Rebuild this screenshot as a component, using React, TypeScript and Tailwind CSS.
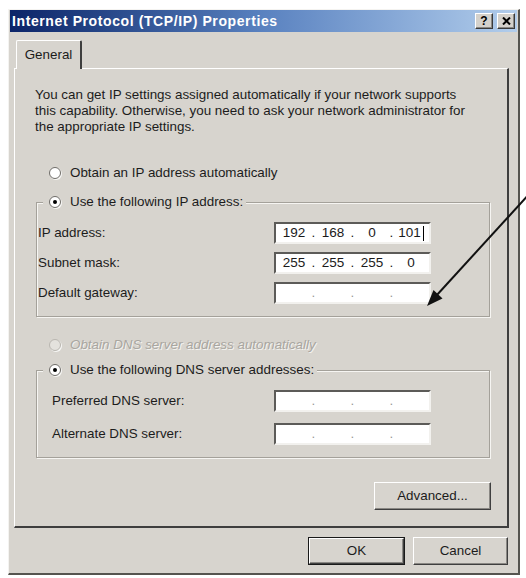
import type { ReactNode } from "react";

const font = { fontFamily: '"Liberation Sans", Arial, sans-serif' };

const Radio = ({ checked, disabled }: { checked?: boolean; disabled?: boolean }) => (
  <span
    className={`relative inline-flex h-[12px] w-[12px] shrink-0 items-center justify-center rounded-full border ${
      disabled ? "border-[#b9b6b0] bg-[#e4e2dd]" : "border-[#6f6d69] bg-white"
    } shadow-[1px_1px_0_#f6f6f4]`}
  >
    {checked && <span className="h-[4px] w-[4px] rounded-full bg-black" />}
  </span>
);

const IpBox = ({ parts, caret }: { parts?: string[]; caret?: boolean }) => {
  const segs = parts ?? ["", "", "", ""];
  return (
    <div className="flex h-[22px] w-[157px] items-center border-2 border-t-[#5c5b58] border-l-[#5c5b58] border-r-[#f2f1ee] border-b-[#f2f1ee] bg-white px-[1px] text-[13.5px] leading-[18px] text-[#1a1a1a]">
      {segs.map((s, i) => (
        <div key={i} className="flex items-center">
          {i > 0 && (
            <span className={`w-[5px] text-center ${parts ? "text-[#1a1a1a]" : "text-[#9a9a9a]"}`}>.</span>
          )}
          <span className="flex w-[34px] items-center justify-center">
            {s}
            {caret && i === 3 && <span className="ml-[2px] inline-block h-[15px] w-[1px] bg-black" />}
          </span>
        </div>
      ))}
    </div>
  );
};

const Row = ({ label, labelW, children }: { label: string; labelW: string; children: ReactNode }) => (
  <div className="flex h-[22px] items-center">
    <span className={`${labelW} text-[13.4px] text-[#1c1c1c]`}>{label}</span>
    {children}
  </div>
);

const Button = ({ label, w, isDefault }: { label: string; w: string; isDefault?: boolean }) => (
  <button
    className={`${w} h-[28px] ${
      isDefault ? "border border-[#1a1a1a]" : ""
    } bg-[#d7d4ce] text-[13.4px] text-[#1c1c1c]`}
  >
    <span className="flex h-full w-full items-center justify-center border border-t-white border-l-white border-r-[#3f3f3f] border-b-[#3f3f3f] shadow-[inset_-1px_-1px_0_#8a8884]">
      {label}
    </span>
  </button>
);

const TitleButton = ({ children }: { children: ReactNode }) => (
  <span className="flex h-[16px] w-[18px] items-center justify-center border border-t-white border-l-white border-r-[#3a3a3a] border-b-[#3a3a3a] bg-[#d4d1cb] shadow-[inset_-1px_-1px_0_#8a8884]">
    {children}
  </span>
);

export default function App() {
  return (
    <div className="relative h-[578px] w-[526px] overflow-hidden bg-white pl-[8px] pt-[9px]" style={font}>
      <div className="flex h-[566px] w-[512px] flex-col border-t border-l border-t-[#f4f3f0] border-l-[#f4f3f0] border-r-2 border-b-2 border-r-[#55544f] border-b-[#55544f] bg-[#d7d4ce]">
        {/* title bar */}
        <div className="mx-[1px] flex h-[22px] items-center justify-between bg-gradient-to-r from-[#0c2468] via-[#5a82c0] to-[#b2cdeb] pl-[2px] pr-[2px]">
          <span className="text-[14px] font-bold tracking-[0.6px] text-white">Internet Protocol (TCP/IP) Properties</span>
          <div className="flex items-center gap-[4px]">
            <TitleButton>
              <span className="text-[12px] font-bold leading-none text-black">?</span>
            </TitleButton>
            <TitleButton>
              <svg width="9" height="8" viewBox="0 0 9 8">
                <path d="M1 0.5 L8 7.5 M8 0.5 L1 7.5" stroke="#000" strokeWidth="2" />
              </svg>
            </TitleButton>
          </div>
        </div>

        {/* tab strip */}
        <div className="ml-[5px] mt-[8px] flex">
          <div className="relative z-10 -mb-[1px] ml-[2px] flex h-[29px] w-[66px] items-center justify-center rounded-t-[2px] border-t border-l border-t-white border-l-white border-r-2 border-r-[#3e3e3e] bg-[#d7d4ce] text-[13.4px] text-[#1c1c1c]">
            General
          </div>
        </div>

        {/* tab panel */}
        <div className="ml-[5px] w-[495px] border-t border-l border-t-white border-l-white border-r-2 border-b-2 border-r-[#3e3e3e] border-b-[#3e3e3e] pl-[20px] pr-[14px] pt-[18px] pb-[16px]">
          <p className="w-[436px] text-[13.4px] leading-[16px] text-[#1c1c1c]">
            You can get IP settings assigned automatically if your network supports this capability. Otherwise, you
            need to ask your network administrator for the appropriate IP settings.
          </p>

          <div className="ml-[14px] mt-[30px] flex h-[16px] items-center gap-[9px] text-[13.4px] text-[#1c1c1c]">
            <Radio />
            <span>Obtain an IP address automatically</span>
          </div>

          <fieldset className="ml-[1px] mt-[13px] w-[454px] border border-[#a4a19a] pb-[12px] shadow-[inset_1px_1px_0_#f6f5f2,1px_1px_0_#f6f5f2]">
            <legend className="ml-[6px] flex h-[16px] items-center gap-[9px] bg-[#d7d4ce] pl-[6px] pr-[3px] text-[13.4px] text-[#1c1c1c]">
              <Radio checked />
              <span>Use the following IP address:</span>
            </legend>
            <div className="mt-[12px] flex flex-col gap-[8px] pl-[1px]">
              <Row label="IP address:" labelW="w-[236px]">
                <IpBox parts={["192", "168", "0", "101"]} caret />
              </Row>
              <Row label="Subnet mask:" labelW="w-[236px]">
                <IpBox parts={["255", "255", "255", "0"]} />
              </Row>
              <Row label="Default gateway:" labelW="w-[236px]">
                <IpBox />
              </Row>
            </div>
          </fieldset>

          <div className="ml-[14px] mt-[20px] flex h-[16px] items-center gap-[9px] text-[13.4px] italic text-[#a9a6a0] [text-shadow:1px_1px_0_#f4f3f0]">
            <Radio disabled />
            <span>Obtain DNS server address automatically</span>
          </div>

          <fieldset className="ml-[1px] mt-[9px] w-[454px] border border-[#a4a19a] pb-[12px] shadow-[inset_1px_1px_0_#f6f5f2,1px_1px_0_#f6f5f2]">
            <legend className="ml-[6px] flex h-[16px] items-center gap-[9px] bg-[#d7d4ce] pl-[6px] pr-[3px] text-[13.4px] text-[#1c1c1c]">
              <Radio checked />
              <span>Use the following DNS server addresses:</span>
            </legend>
            <div className="mt-[12px] flex flex-col gap-[11px] pl-[15px]">
              <Row label="Preferred DNS server:" labelW="w-[222px]">
                <IpBox />
              </Row>
              <Row label="Alternate DNS server:" labelW="w-[222px]">
                <IpBox />
              </Row>
            </div>
          </fieldset>

          <div className="mt-[24px] flex justify-end pr-[2px]">
            <Button label="Advanced..." w="w-[117px]" />
          </div>
        </div>

        {/* dialog buttons */}
        <div className="mt-[9px] flex justify-end gap-[8px] pr-[10px]">
          <Button label="OK" w="w-[97px]" isDefault />
          <Button label="Cancel" w="w-[95px]" />
        </div>
      </div>

      {/* annotation arrow */}
      <svg className="pointer-events-none absolute left-0 top-0" width="526" height="578" viewBox="0 0 526 578">
        <line x1="531" y1="192" x2="436" y2="296" stroke="#111" strokeWidth="2" />
        <polygon points="427,306 442.5,298.5 433.5,290" fill="#111" />
      </svg>
    </div>
  );
}
